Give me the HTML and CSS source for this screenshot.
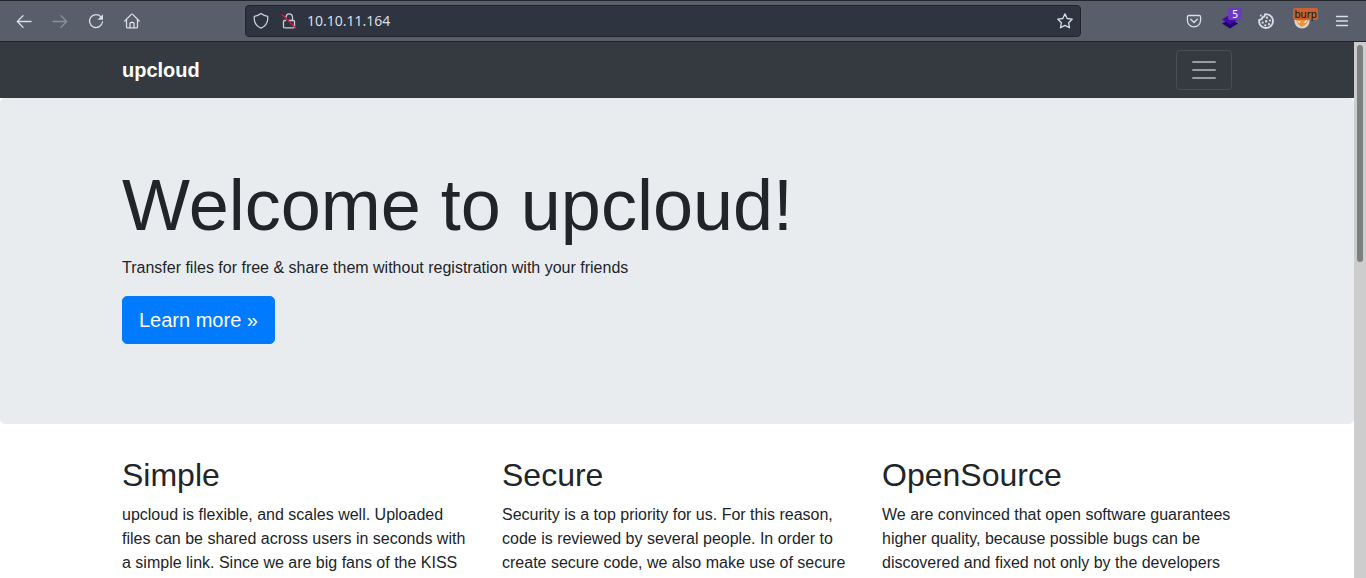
FILE: index.html
```html
<!DOCTYPE html>
<html lang="en">
<head>
<meta charset="utf-8">
<meta name="viewport" content="width=device-width, initial-scale=1">
<title>upcloud</title>
<link rel="stylesheet" href="styles.css">
</head>
<body>
<div class="toolbar">
  <div class="nav-buttons">
    <button class="tool" aria-label="Back"><svg viewBox="0 0 16 16"><path d="M15 8.500H1.500M7 2.700L1.300 8.500L7 14.300"/></svg></button>
    <button class="tool" aria-label="Forward" disabled><svg viewBox="0 0 16 16"><path d="M1 8.500H14.500M9 2.700L14.700 8.500L9 14.300"/></svg></button>
    <button class="tool" aria-label="Reload"><svg viewBox="0 0 16 16"><path d="M13 3.800A6.500 6.500 0 1 0 14.500 9"/><path class="solid" d="M15 1.200v5.500H9.500z"/></svg></button>
    <button class="tool" aria-label="Home"><svg viewBox="0 0 16 16"><path d="M.8 8L7.300 1.400q.7-.7 1.400 0L15.200 8M2.500 6.500V14q0 .8.8.8h9.400q.8 0 .8-.8V6.500M6 14.500V10.500q0-1 1-1h2q1 0 1 1v4"/></svg></button>
  </div>
  <div class="address">
    <svg class="icon" viewBox="0 0 16 16"><path d="M8 .6Q11 3 14.700 3.400V6.500Q14.200 12.500 8 15.200Q1.800 12.500 1.300 6.500V3.400Q5 3 8 .6z"/></svg>
    <svg class="icon" viewBox="0 0 16 16"><path d="M5 4.300Q5.300 .8 8 .8Q11.500.8 11.500 4.500V7M8 7.500h4.500q1 0 1 1v5.300q0 1-1 1h-9q-1 0-1-1V8.500q0-1 1-1h1"/><path class="strike" d="M1.300 1.800L14.700 15"/></svg>
    <input class="url" type="text" aria-label="Address" value="10.10.11.164">
    <button class="tool small" aria-label="Bookmark"><svg viewBox="0 0 16 16"><path d="M8 .9L10.200 5.500L15.200 6.200L11.600 9.700L12.500 14.800L8 12.400L3.500 14.800L4.400 9.700L.8 6.200L5.800 5.500z"/></svg></button>
  </div>
  <div class="extensions">
    <button class="tool" aria-label="Pocket"><svg viewBox="0 0 16 16"><path d="M2.800 2.500h10.400q1.400 0 1.400 1.400V7.200Q14.200 13.500 8 13.800Q1.800 13.500 1.400 7.200V3.900q0-1.400 1.400-1.400zM4.700 6.300L8 9.500L11.300 6.300"/></svg></button>
    <button class="tool" aria-label="Layers, 5"><svg viewBox="0 0 16 16"><path class="layer-low" d="M0 10.500L8 6L16 10.500L8 15.500z"/><path class="layer-top" d="M0 6.500L8 1.500L16 6.500L8 11.500z"/></svg><span class="badge">5</span></button>
    <button class="tool" aria-label="Cookies"><svg viewBox="0 0 16 16"><path class="bold" d="M7 1.200Q7 4 4.500 4.200Q4.300 6.700 1.100 7Q.7 11.500 4 13.800Q8 16.200 12 13.700Q15.600 11 14.900 6.500Q13.300 1 7 1.200z"/><circle class="dot" cx="9" cy="4.700" r="1.100"/><circle class="dot" cx="12" cy="7.500" r="1.100"/><circle class="dot" cx="8.200" cy="8.300" r="1.200"/><circle class="dot" cx="4.700" cy="9.700" r="1.100"/><circle class="dot" cx="11" cy="11.200" r="1.100"/><circle class="dot" cx="7.300" cy="12.300" r="1.100"/><circle class="dot" cx="2.800" cy="2.500" r=".9"/></svg></button>
    <button class="tool" aria-label="FoxyProxy, burp"><svg viewBox="0 0 16 16"><circle class="fox-rim" cx="8" cy="7.700" r="7.700"/><path class="fox" d="M1.500 4Q8 1 14.500 4Q15 11 8 13.800Q3 12 1.500 4z"/><path class="fox-face" d="M3 8.500L7 8L5.500 10zM9.500 9.500L13 6.500L12 10z"/></svg><span class="badge proxy">burp</span></button>
    <button class="tool menu" aria-label="Menu"><svg viewBox="0 0 16 16"><path d="M2.500 3.500h11M2.500 8h11M2.500 12.500h11"/></svg></button>
  </div>
</div>
<div class="viewport">
  <div class="page">
    <nav class="navbar">
      <div class="container navbar-row">
        <a class="brand" href="#">upcloud</a>
        <button class="toggler" aria-label="Toggle navigation"><svg viewBox="0 0 30 30"><path d="M4 7h22M4 15h22M4 23h22"/></svg></button>
      </div>
    </nav>
    <main>
      <section class="jumbotron">
        <div class="container">
          <h1>Welcome to upcloud!</h1>
          <p>Transfer files for free &amp; share them without registration with your friends</p>
          <p><a class="button" href="#">Learn more »</a></p>
        </div>
      </section>
      <div class="container features">
        <section class="feature">
          <h2>Simple</h2>
          <p>upcloud is flexible, and scales well. Uploaded files can be shared across users in seconds with a simple link. Since we are big fans of the KISS</p>
        </section>
        <section class="feature">
          <h2>Secure</h2>
          <p>Security is a top priority for us. For this reason, code is reviewed by several people. In order to create secure code, we also make use of secure</p>
        </section>
        <section class="feature">
          <h2>OpenSource</h2>
          <p>We are convinced that open software guarantees higher quality, because possible bugs can be discovered and fixed not only by the developers</p>
        </section>
      </div>
    </main>
  </div>
  <div class="scrollbar"><div class="thumb"></div></div>
</div>
</body>
</html>
```
FILE: styles.css
```css
* {
  box-sizing: border-box;
}

body {
  margin: 0;
  height: 100vh;
  display: flex;
  flex-direction: column;
  overflow: hidden;
  font: 16px/24px "Liberation Sans", Arial, sans-serif;
  color: #212529;
  background: #fff;
}

h1, h2, p {
  margin: 0;
}

button {
  font: inherit;
  cursor: pointer;
}

/* Browser toolbar */
.toolbar {
  flex: none;
  display: flex;
  align-items: center;
  padding: 4px 6px;
  background: #595e6b;
  border-top: 1px solid #22252c;
  border-bottom: 1px solid #22252c;
}

.nav-buttons,
.extensions {
  flex: none;
  display: flex;
}

.tool {
  position: relative;
  display: flex;
  align-items: center;
  justify-content: center;
  width: 36px;
  height: 32px;
  padding: 0;
  border: 0;
  background: none;
  color: #d8dee9;
}

.tool:disabled {
  opacity: 0.4;
}

.tool.small {
  width: 30px;
}

.tool.menu {
  margin-left: 4px;
}

.tool svg,
.icon {
  flex: none;
  width: 16px;
  height: 16px;
  fill: none;
  stroke: currentColor;
  stroke-width: 1.3;
  stroke-linejoin: round;
  stroke-linecap: round;
}

.tool .bold {
  stroke-width: 1.8;
}

.tool .solid,
.tool .dot {
  fill: currentColor;
  stroke: none;
}

.icon .strike {
  stroke: #e3154b;
}

.tool .layer-low {
  fill: #210070;
  stroke: none;
}

.tool .layer-top {
  fill: #4708a8;
  stroke: none;
}

.tool .fox-rim {
  fill: #d9d2cb;
  stroke: none;
}

.tool .fox {
  fill: #f09235;
  stroke: none;
}

.tool .fox-face {
  fill: #fff3df;
  stroke: none;
}

.badge {
  position: absolute;
  top: 3px;
  right: 6px;
  padding: 0 4px;
  border-radius: 2px;
  background: #6c3ac0;
  color: #fff;
  font: 10px/12px "Noto Sans", sans-serif;
}

.badge.proxy {
  right: 2px;
  padding: 0 1px;
  background: #cc6032;
  color: #111;
}

.address {
  flex: 1;
  min-width: 0;
  display: flex;
  align-items: center;
  gap: 12px;
  height: 32px;
  padding-left: 7px;
  margin: 0 95px;
  border: 1px solid #20242c;
  border-radius: 4px;
  background: #2e3440;
  color: #c9cfda;
}

.url {
  flex: 1;
  min-width: 0;
  padding: 0;
  margin-left: -2px;
  border: 0;
  outline: 0;
  background: none;
  color: #d8dee9;
  font: 14px/20px "Noto Sans", sans-serif;
}

/* Page area */
.viewport {
  flex: 1;
  min-height: 0;
  display: flex;
}

.page {
  flex: 1;
  min-width: 0;
  overflow: hidden;
}

.scrollbar {
  flex: none;
  width: 12px;
  padding: 3px;
  background: #cdcdcd;
}

.thumb {
  height: 41%;
  border-radius: 3px;
  background: #7b8080;
}

.container {
  width: 100%;
  max-width: 1140px;
  margin: 0 auto;
  padding: 0 15px;
}

.navbar {
  padding: 8px 0;
  background: #343a40;
}

.navbar-row {
  display: flex;
  align-items: center;
  justify-content: space-between;
}

.brand {
  color: #fff;
  font-size: 20px;
  line-height: 30px;
  font-weight: bold;
  text-decoration: none;
}

.toggler {
  display: flex;
  align-items: center;
  justify-content: center;
  width: 56px;
  height: 40px;
  padding: 0;
  border: 1px solid rgba(255, 255, 255, 0.1);
  border-radius: 4px;
  background: none;
}

.toggler svg {
  width: 30px;
  height: 30px;
  stroke: rgba(255, 255, 255, 0.5);
  stroke-width: 2;
  stroke-linecap: round;
}

.jumbotron {
  padding: 64px 0;
  margin-bottom: 32px;
  border-radius: 5px;
  background: #e9ecef;
}

.jumbotron p {
  margin-bottom: 16px;
}

h1,
h2 {
  margin-bottom: 8px;
  line-height: 1.2;
  font-weight: 500;
}

h1 {
  font-size: 72px;
  font-weight: 300;
}

h2 {
  font-size: 32px;
}

.button {
  display: inline-block;
  vertical-align: middle;
  padding: 8px 16px;
  border: 1px solid #007bff;
  border-radius: 5px;
  background: #007bff;
  color: #fff;
  font-size: 20px;
  line-height: 30px;
  text-decoration: none;
}

.features {
  display: grid;
  grid-template-columns: repeat(3, 1fr);
  gap: 30px;
}
```
